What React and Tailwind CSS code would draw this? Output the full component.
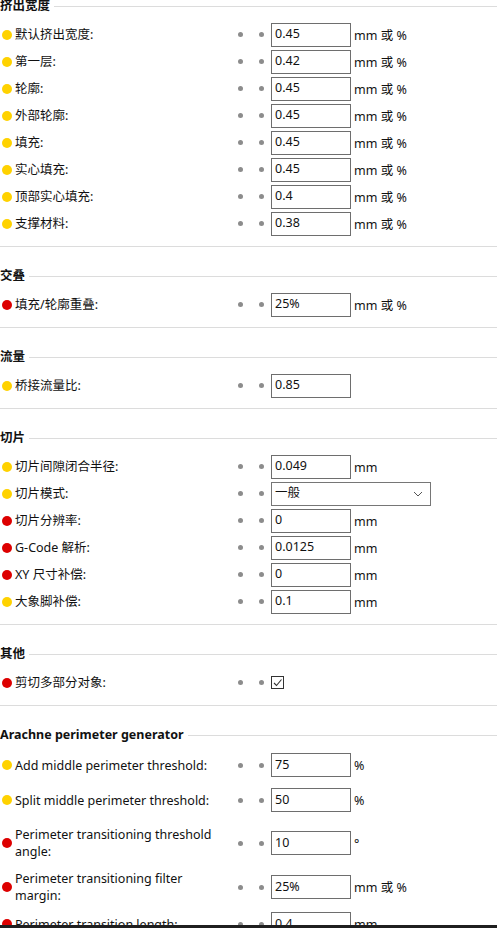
import React from 'react';

const Y = 'bg-[#ffd200]';
const R = 'bg-[#dd0000]';

const SECTIONS = [
  {
    title: '挤出宽度',
    rows: [
      { c: Y, label: '默认挤出宽度:', value: '0.45', unit: 'mm 或 %' },
      { c: Y, label: '第一层:', value: '0.42', unit: 'mm 或 %' },
      { c: Y, label: '轮廓:', value: '0.45', unit: 'mm 或 %' },
      { c: Y, label: '外部轮廓:', value: '0.45', unit: 'mm 或 %' },
      { c: Y, label: '填充:', value: '0.45', unit: 'mm 或 %' },
      { c: Y, label: '实心填充:', value: '0.45', unit: 'mm 或 %' },
      { c: Y, label: '顶部实心填充:', value: '0.4', unit: 'mm 或 %' },
      { c: Y, label: '支撑材料:', value: '0.38', unit: 'mm 或 %' },
    ],
  },
  {
    title: '交叠',
    rows: [{ c: R, label: '填充/轮廓重叠:', value: '25%', unit: 'mm 或 %' }],
  },
  {
    title: '流量',
    rows: [{ c: Y, label: '桥接流量比:', value: '0.85', unit: '' }],
  },
  {
    title: '切片',
    rows: [
      { c: Y, label: '切片间隙闭合半径:', value: '0.049', unit: 'mm' },
      { c: Y, label: '切片模式:', select: '一般' },
      { c: R, label: '切片分辨率:', value: '0', unit: 'mm' },
      { c: R, label: 'G-Code 解析:', value: '0.0125', unit: 'mm' },
      { c: R, label: 'XY 尺寸补偿:', value: '0', unit: 'mm' },
      { c: Y, label: '大象脚补偿:', value: '0.1', unit: 'mm' },
    ],
  },
  {
    title: '其他',
    rows: [{ c: R, label: '剪切多部分对象:', checkbox: true }],
  },
  {
    title: 'Arachne perimeter generator',
    last: true,
    rows: [
      { c: Y, label: 'Add middle perimeter threshold:', value: '75', unit: '%', h: 'h-[30px]' },
      { c: Y, label: 'Split middle perimeter threshold:', value: '50', unit: '%', h: 'h-[40px]' },
      { c: R, label: 'Perimeter transitioning threshold angle:', value: '10', unit: '°', h: 'h-[46px]' },
      { c: R, label: 'Perimeter transitioning filter margin:', value: '25%', unit: 'mm 或 %', h: 'h-[42px]' },
      { c: R, label: 'Perimeter transition length:', value: '0.4', unit: 'mm', h: 'h-[32px]' },
    ],
  },
];

function Row({ row }) {
  return (
    <div className={`flex items-center ${row.h || 'h-[27px]'}`}>
      <div className="w-[233px] shrink-0 flex items-center">
        <span className={`w-[10px] h-[10px] rounded-full ml-[2px] mr-[3px] shrink-0 ${row.c}`} />
        <span className="w-[200px] leading-[17px] text-[12.5px] text-[#111]">{row.label}</span>
      </div>
      <span className="w-[5px] h-[5px] rounded-full bg-[#8c8c8c] ml-[5px] shrink-0" />
      <span className="w-[5px] h-[5px] rounded-full bg-[#8c8c8c] ml-[16px] shrink-0" />
      <div className="ml-[7px] flex items-center">
        {row.select ? (
          <div className="w-[160px] h-[24px] border border-[#767676] flex items-center justify-between px-[3px] text-[12.5px] text-[#111]">
            <span>{row.select}</span>
            <svg width="10" height="6" viewBox="0 0 10 6" className="mr-[4px]">
              <path d="M1 1 L5 5 L9 1" fill="none" stroke="#555" strokeWidth="1" />
            </svg>
          </div>
        ) : row.checkbox ? (
          <div className="w-[13px] h-[13px] border border-[#333] flex items-center justify-center">
            <svg width="11" height="11" viewBox="0 0 11 11">
              <path d="M2 6 L4.5 8.5 L9.5 2.5" fill="none" stroke="#333" strokeWidth="1.1" />
            </svg>
          </div>
        ) : (
          <>
            <div className="w-[80px] h-[24px] border border-[#6e6e6e] px-[3px] flex items-center text-[12.5px] text-[#111]">
              {row.value}
            </div>
            <span className="ml-[3px] pt-[3px] text-[12.5px] text-[#111]">{row.unit}</span>
          </>
        )}
      </div>
    </div>
  );
}

function Section({ s }) {
  return (
    <div>
      <div className="h-[20px] flex items-center">
        <span className="font-bold text-[12.5px] text-[#111]">{s.title}</span>
        <div className="flex-1 h-px bg-[#dcdcdc] ml-[4px]" />
      </div>
      <div className="mt-[5px]">
        {s.rows.map((r, i) => (
          <Row key={i} row={r} />
        ))}
      </div>
      {!s.last && <div className="mt-[9px] mb-[19px] h-px bg-[#dcdcdc]" />}
    </div>
  );
}

export default function App() {
  return (
    <div
      className="w-[497px] h-[928px] overflow-hidden bg-white relative"
      style={{ fontFamily: '"Noto Sans", "Noto Sans CJK SC", sans-serif' }}
    >
      <div className="mt-[-4px]">
        {SECTIONS.map((s, i) => (
          <Section key={i} s={s} />
        ))}
      </div>
      <div className="fixed left-0 right-0 bottom-0 h-[3px] bg-[#1f1f1f]" />
    </div>
  );
}
